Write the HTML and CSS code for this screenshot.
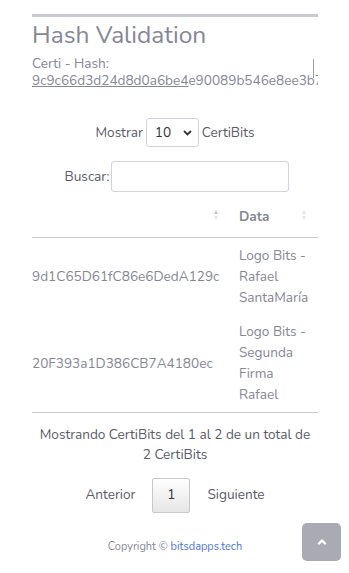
FILE: index.html
```html
<!DOCTYPE html>
<html lang="es">
<head>
<meta charset="utf-8">
<title>Hash Validation</title>
<link rel="stylesheet" href="styles.css">
</head>
<body>
<div class="page">
  <div class="topbar"></div>
  <h3 class="title">Hash Validation</h3>
  <div class="hash-block">
    <div class="hash-label">Certi - Hash:</div>
    <div class="hash-value"><a class="hash-link" href="#">9c9c66d3d24d8d0a6be4</a>e90089b546e8ee3b7a1f</div>
    <span class="caret"></span>
  </div>

  <div class="length">
    <span>Mostrar</span>
    <div class="select"><span>10</span><svg width="9" height="6" viewBox="0 0 9 6"><path d="M1 1l3.5 3.5L8 1" fill="none" stroke="#333" stroke-width="1.8"/></svg></div>
    <span>CertiBits</span>
  </div>

  <div class="filter">
    <span>Buscar:</span>
    <div class="input"></div>
  </div>

  <table class="table">
    <thead>
      <tr>
        <th class="col-hash"><span class="sort active"><i class="up"></i><i class="down"></i></span></th>
        <th class="col-data">Data<span class="sort"><i class="up"></i><i class="down"></i></span></th>
      </tr>
    </thead>
    <tbody>
      <tr>
        <td class="hash-cell">9d1C65D61fC86e6DedA129c</td>
        <td class="data-cell">Logo Bits - Rafael SantaMaría</td>
      </tr>
      <tr>
        <td class="hash-cell">20F393a1D386CB7A4180ec</td>
        <td class="data-cell">Logo Bits - Segunda Firma Rafael</td>
      </tr>
    </tbody>
  </table>

  <div class="info">Mostrando CertiBits del 1 al 2 de un total de 2 CertiBits</div>

  <div class="paginate">
    <span class="pg-link">Anterior</span>
    <span class="pg-current">1</span>
    <span class="pg-link">Siguiente</span>
  </div>

  <footer class="footer">Copyright © <a href="#">bitsdapps.tech</a></footer>
</div>
<a class="scroll-top" href="#"><svg width="10" height="8" viewBox="0 0 10 8"><path d="M2 5.5L5 2.5 8 5.5" fill="none" stroke="#fff" stroke-width="2.4" stroke-linecap="round" stroke-linejoin="round"/></svg></a>
</body>
</html>
```
FILE: styles.css
```css
* { box-sizing: border-box; }
html, body { margin: 0; padding: 0; background: #fff; }
body {
  font-family: "Nunito", Lato, "Noto Sans", sans-serif;
  font-size: 13.6px;
  line-height: 1.5;
  color: #858796;
}
.page {
  padding: 14px 31px 0 32px;
}
.topbar {
  height: 3px;
  background: #c9cbd0;
}
.title {
  margin: 4px 0 5px;
  font-size: 24.5px;
  font-weight: 400;
  line-height: 1.2;
  color: #858796;
}
.hash-block {
  position: relative;
  font-size: 13.6px;
  line-height: 17px;
}
.hash-value {
  white-space: nowrap;
  overflow: hidden;
  color: #858796;
}
.hash-link {
  color: #858796;
  text-decoration: underline;
}
.caret {
  position: absolute;
  right: 4px;
  top: 4px;
  width: 1px;
  height: 19px;
  background: #9a9ba3;
}
.length {
  margin-top: 29px;
  display: flex;
  justify-content: center;
  align-items: center;
  gap: 3px;
  color: #5a5c69;
}
.select {
  width: 53px;
  height: 29px;
  border: 1px solid #d1d3e2;
  border-radius: 3px;
  display: flex;
  align-items: center;
  justify-content: space-between;
  padding: 0 6px 0 8px;
  color: #333;
}
.filter {
  margin-top: 14px;
  display: flex;
  justify-content: center;
  align-items: center;
  gap: 2px;
  color: #5a5c69;
  padding-left: 4px;
}
.input {
  width: 178px;
  height: 31px;
  border: 1px solid #d1d3e2;
  border-radius: 3px;
}
.table {
  width: 100%;
  margin-top: 5px;
  border-collapse: collapse;
  table-layout: fixed;
}
.table th {
  position: relative;
  height: 40px;
  text-align: left;
  font-weight: 700;
  padding: 0 11px;
  border-bottom: 1px solid #c8c9cd;
}
.col-hash { width: 196px; }
.sort {
  position: absolute;
  right: 10px;
  top: 13px;
  display: flex;
  flex-direction: column;
  gap: 2px;
}
.sort i {
  display: block;
  width: 0;
  height: 0;
  border-left: 2.5px solid transparent;
  border-right: 2.5px solid transparent;
}
.sort .up { border-bottom: 4px solid #e3e4e8; }
.sort .down { border-top: 4px solid #e3e4e8; }
.sort.active .up { border-bottom-color: #c2c3c9; }
.col-data .sort { right: 12px; }
.table td {
  padding: 7px 11px 6.5px;
  line-height: 21px;
  vertical-align: middle;
}
.table tbody tr:last-child td { border-bottom: 1px solid #c8c9cd; }
.hash-cell {
  padding-left: 0 !important;
  color: #858796;
  white-space: nowrap;
  overflow: visible;
}
.data-cell { color: #858796; }
.info {
  margin-top: 12px;
  text-align: center;
  line-height: 20px;
  color: #5a5c69;
  padding: 0 4px;
}
.paginate {
  margin-top: 13px;
  display: flex;
  justify-content: center;
  align-items: center;
  color: #5a5c69;
}
.pg-link { padding: 0 17px; }
.pg-current {
  width: 38px;
  height: 35px;
  display: flex;
  align-items: center;
  justify-content: center;
  border: 1px solid #c8c8c8;
  border-radius: 2px;
  background: linear-gradient(#fff, #e6e6e6);
  color: #333;
}
.footer {
  margin-top: 26px;
  text-align: center;
  font-size: 11px;
  color: #858796;
}
.footer a { color: #4e73df; text-decoration: none; }
.scroll-top {
  position: fixed;
  right: 8px;
  bottom: 12px;
  width: 39px;
  height: 38px;
  border-radius: 5px;
  background: #a9aab2;
  display: flex;
  align-items: center;
  justify-content: center;
}
```
